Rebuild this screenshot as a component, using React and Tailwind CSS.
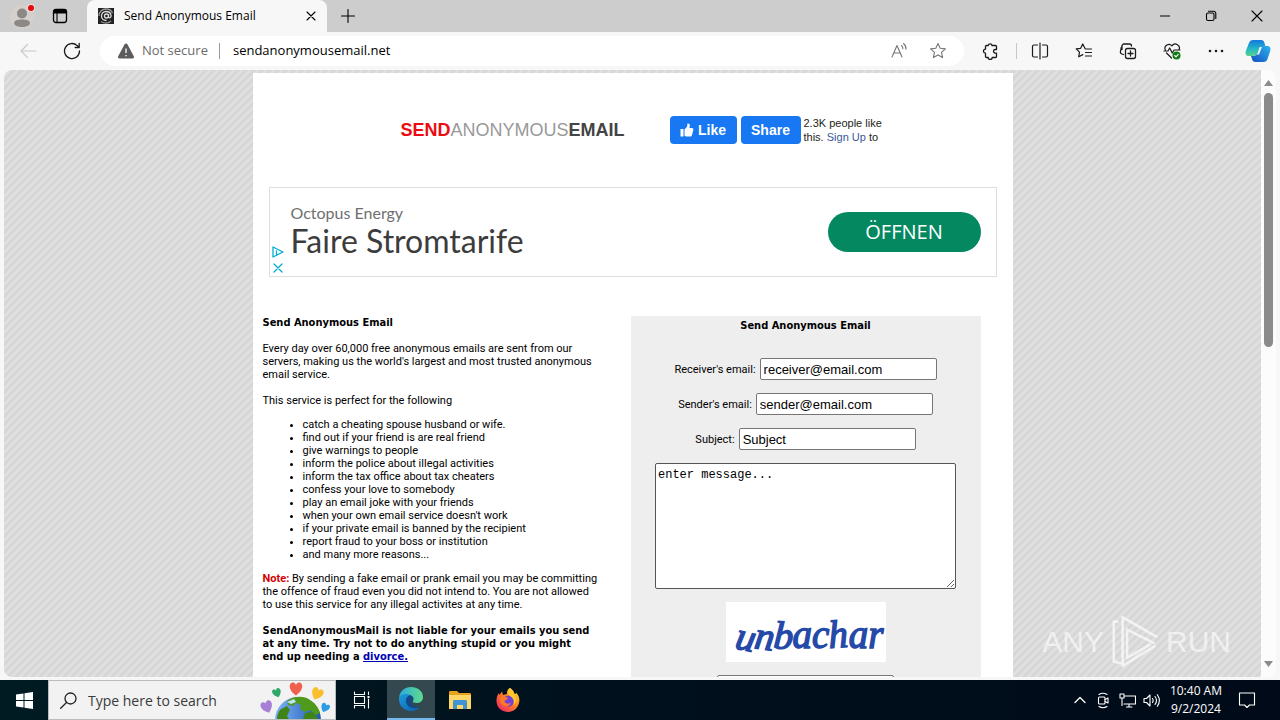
import React from 'react';

const reasons = [
  'catch a cheating spouse husband or wife.',
  'find out if your friend is are real friend',
  'give warnings to people',
  'inform the police about illegal activities',
  'inform the tax office about tax cheaters',
  'confess your love to somebody',
  'play an email joke with your friends',
  "when your own email service doesn't work",
  'if your private email is banned by the recipient',
  'report fraud to your boss or institution',
  'and many more reasons...',
];

const fields = [
  { id: 'receiver', label: "Receiver's email:", value: 'receiver@email.com' },
  { id: 'sender', label: "Sender's email:", value: 'sender@email.com' },
  { id: 'subject', label: 'Subject:', value: 'Subject' },
];

const Icon = ({ size = 18, box = 18, className = '', children }) => (
  <svg
    width={size}
    height={size}
    viewBox={`0 0 ${box} ${box}`}
    fill="none"
    stroke="currentColor"
    strokeWidth="1.1"
    strokeLinecap="round"
    strokeLinejoin="round"
    className={className}
    aria-hidden="true"
  >
    {children}
  </svg>
);

const TabStrip = () => (
  <div className="flex h-8 shrink-0 items-stretch bg-[#cdcdcd]">
    <button aria-label="Profile" className="flex w-11 items-center justify-center">
      <svg width="28" height="28" viewBox="0 0 28 28">
        <circle cx="14" cy="15" r="12" fill="#d3d0ce" />
        <circle cx="14" cy="11.500" r="5" fill="#8b8886" />
        <path d="M6 21c0-2.600 3.500-3.600 8-3.600s8 1 8 3.600c0 2.400-3.500 4-8 4s-8-1.600-8-4z" fill="#8b8886" />
        <circle cx="23" cy="6" r="4" fill="#f4d5d5" />
        <circle cx="23" cy="6" r="3" fill="#e00b0b" />
      </svg>
    </button>
    <button aria-label="Tab actions" className="flex w-8 items-center justify-center">
      <Icon size={16} box={16}>
        <rect x="1.500" y="1.500" width="13" height="13" rx="2.500" strokeWidth="1.300" />
        <path d="M1.500 3.500a2 2 0 0 1 2-2h9a2 2 0 0 1 2 2V5h-13z" fill="currentColor" />
        <path d="M5 5v9.500" />
      </Icon>
    </button>
    <div className="ml-[11px] flex w-60 items-center rounded-t-lg bg-[#f7f7f7] pl-[11px] pr-[6px]">
      <svg width="16" height="16" viewBox="0 0 16 16" className="shrink-0">
        <rect width="16" height="16" fill="#222" />
        <g fill="none" stroke="#ddd" strokeWidth="1.300">
          <circle cx="8.500" cy="8" r="2" />
          <path d="M10.500 6v3.500c1.500 1 3-.5 2.500-2.500-.5-2.500-2.500-3.500-5-3.500S3.500 5.500 3.500 8s2 4.500 5 4.500" />
          <path d="M1 8c0-4 3-7 7-7 3 0 5.500 1.500 6.500 4M3 13.500c3 2 7 2 10-.5" stroke="#999" />
        </g>
      </svg>
      <span className="ml-[10px] flex-1 whitespace-nowrap text-[12px] leading-4 text-black">Send Anonymous Email</span>
      <button aria-label="Close tab" className="flex size-5 items-center justify-center">
        <Icon size={10} box={10}><path d="M1 1l8 8M9 1l-8 8" /></Icon>
      </button>
    </div>
    <button aria-label="New tab" className="ml-3 flex w-[18px] items-center justify-center">
      <Icon size={14} box={14}><path d="M7 .5v13M.5 7h13" /></Icon>
    </button>
    <div className="flex-1" />
    <button aria-label="Minimize" className="flex w-[46px] items-center justify-center">
      <Icon size={10} box={10}><path d="M0 5h10" /></Icon>
    </button>
    <button aria-label="Restore" className="flex w-[46px] items-center justify-center">
      <Icon size={12} box={12}>
        <rect x="1.500" y="3" width="7.500" height="7.500" rx="1.500" />
        <path d="M3.500 1.200h5a2.300 2.300 0 0 1 2.300 2.300v5" />
      </Icon>
    </button>
    <button aria-label="Close" className="flex w-[46px] items-center justify-center">
      <Icon size={12} box={12}><path d="M1 1l10 10M11 1L1 11" /></Icon>
    </button>
  </div>
);

const star = 'M9 1.500l2.200 4.800 5.200.6-3.900 3.500 1.100 5.200L9 13l-4.600 2.600 1.100-5.200L1.600 6.900l5.200-.6z';

const Toolbar = () => (
  <div className="flex h-[38px] shrink-0 items-center bg-[#f7f7f7] pl-[18px] pr-2 text-[#1b1b1b]">
    <button aria-label="Back" className="flex w-5 justify-center text-[#c8c8c8]">
      <Icon><path d="M17 9H2M8.500 2.500L2 9l6.500 6.500" /></Icon>
    </button>
    <button aria-label="Refresh" className="ml-6 flex w-5 justify-center">
      <Icon><path d="M16.500 9a7.500 7.500 0 1 1-2.300-5.400L16 5.200M16.200 1.500v4h-4" strokeWidth="1.300" /></Icon>
    </button>
    <div className="ml-[18px] flex h-[30px] flex-1 items-center rounded-full bg-white pl-[17px] pr-[17px]">
      <svg width="18" height="16" viewBox="0 0 18 16" className="shrink-0" aria-hidden="true">
        <path d="M7.600 1.300a1.600 1.600 0 0 1 2.800 0l6.400 11.900a1.500 1.500 0 0 1-1.300 2.300h-13a1.500 1.500 0 0 1-1.300-2.300z" fill="#5c5c5c" />
        <path d="M9 5.500v4.500M9 12v1.300" stroke="#fff" strokeWidth="1.300" />
      </svg>
      <span className="ml-[7px] whitespace-nowrap text-[13px] text-[#6b6b6b]">Not secure</span>
      <span className="ml-[11px] h-4 w-px bg-[#9a9a9a]" />
      <input
        aria-label="Address"
        defaultValue="sendanonymousemail.net"
        className="ml-[13px] min-w-0 flex-1 bg-transparent text-[13px] text-black outline-none"
      />
      <button aria-label="Read aloud" className="text-[#767676]">
        <Icon>
          <path d="M2 15L7 3.500 12 15M3.800 11h6.400M11.500 3.500c1 .8 1.500 2 1.300 3.300M13.500 1.500c1.700 1.300 2.700 3.300 2.400 5.600" />
        </Icon>
      </button>
      <button aria-label="Favorite this page" className="ml-[21px] text-[#767676]">
        <Icon><path d={star} /></Icon>
      </button>
    </div>
    <button aria-label="Extensions" className="ml-[18px]">
      <Icon>
        <path d="M6.200 3.500a2 2 0 0 1 3.900 0h3.400a1 1 0 0 1 1 1v3h-1.200a1.800 1.800 0 0 0 0 3.600h1.200v3.400a1 1 0 0 1-1 1h-3.300a2 2 0 0 1-4 0H4.500a1 1 0 0 1-1-1v-3.300a2 2 0 0 1 0-4V4.500a1 1 0 0 1 1-1z" strokeWidth="1.300" />
      </Icon>
    </button>
    <span className="ml-4 h-4 w-px bg-[#c8c8c8]" />
    <button aria-label="Split screen" className="ml-[14px]">
      <Icon>
        <path d="M9 1v16M6.500 3H3a1.500 1.500 0 0 0-1.500 1.500v9A1.500 1.500 0 0 0 3 15h3.500M11.500 3H15a1.500 1.500 0 0 1 1.500 1.500v9A1.500 1.500 0 0 1 15 15h-3.500" strokeWidth="1.200" />
      </Icon>
    </button>
    <button aria-label="Favorites" className="ml-[26px]">
      <Icon>
        <path d="M10 6.500L7.800 2 5.600 6.300l-4.400.6 3.300 3.200-.8 4.700L7.800 12.600M10.500 7h6M10.500 10.500h6M10.500 14h6" strokeWidth="1.200" />
      </Icon>
    </button>
    <button aria-label="Collections" className="ml-[26px]">
      <Icon>
        <rect x="6.500" y="6.500" width="10" height="10" rx="2" strokeWidth="1.300" />
        <path d="M11.500 9v5M9 11.500h5M4.500 12.500L2.800 12a2 2 0 0 1-1.400-2.300l1-4.500M3 7.500V4a2 2 0 0 1 2-2h5.500a2 2 0 0 1 2 2" strokeWidth="1.300" />
      </Icon>
    </button>
    <button aria-label="Browser essentials" className="ml-[26px]">
      <Icon>
        <path d="M2.300 8A4 4 0 0 1 9 3.800 4 4 0 0 1 15.800 8M1 9h4l1.700-3 2.500 5 1.800-3h6M3.500 11L8.500 16" strokeWidth="1.200" />
        <circle cx="13.500" cy="13.500" r="4" fill="#107c10" stroke="none" />
        <path d="M11.700 13.500l1.300 1.300 2.200-2.400" stroke="#fff" />
      </Icon>
    </button>
    <button aria-label="Settings and more" className="ml-[26px]">
      <Icon>
        <g fill="currentColor" stroke="none">
          <circle cx="3" cy="9" r="1.300" /><circle cx="9" cy="9" r="1.300" /><circle cx="15" cy="9" r="1.300" />
        </g>
      </Icon>
    </button>
    <button aria-label="Copilot" className="ml-[19px]">
      <svg width="28" height="26" viewBox="0 0 28 26">
        <defs>
          <linearGradient id="cpA" x1="0" y1="0" x2="0" y2="1">
            <stop offset="0" stopColor="#1577dc" /><stop offset=".55" stopColor="#22b8c8" /><stop offset="1" stopColor="#5bd08a" />
          </linearGradient>
          <linearGradient id="cpB" x1="1" y1="0" x2="0" y2="1">
            <stop offset="0" stopColor="#2bb4ee" /><stop offset="1" stopColor="#154fc4" />
          </linearGradient>
        </defs>
        <path d="M19.500 24h-8c-2 0-3-1-3.500-3l-1-3h4l3.500-10H23c3 0 4 2 3.200 5l-2.700 8c-.6 2-2 3-4 3z" fill="url(#cpB)" />
        <path d="M9 2h8c2 0 3 1 3.500 3l.8 3h-3c-2 0-3 1-3.600 3l-1.700 4.500c-.6 1.700-2 2.500-4 2.500H5c-3 0-4-2-3.200-5L5 5c.6-2 2-3 4-3z" fill="url(#cpA)" />
        <path d="M15.700 9h2.300l-3 7.500h-3.200c1-.3 1.500-1 1.900-2l1.200-3.500c.2-.8.400-1.400.8-2z" fill="#e8f6fb" />
      </svg>
    </button>
  </div>
);

const Header = () => (
  <header className="flex items-center pl-[148px] pt-[43px]">
    <h1 className="flex w-[269px] whitespace-nowrap font-['Liberation_Sans',sans-serif] text-[18px] leading-7">
      <span className="font-bold text-[#ec0b12]">SEND</span>
      <span className="text-[#999]">ANONYMOUS</span>
      <span className="font-bold text-[#444]">EMAIL</span>
    </h1>
    <div className="flex items-center font-['Liberation_Sans',Arial,sans-serif]">
      <button className="flex h-7 w-[67px] items-center justify-center gap-1 rounded bg-[#1877f2] text-[14px] font-bold text-white">
        <svg width="14" height="14" viewBox="0 0 14 14" fill="#fff" aria-hidden="true">
          <path d="M.5 6h3v7.500h-3zM4.500 6.500L7 3.800 7.500.5c1.700-.3 2.600 1 2.300 2.600L9.400 5H12c1.200 0 1.600 1 1.300 2l-1.300 5c-.3 1-.8 1.500-1.800 1.500H7c-1.200 0-1.800-.4-2.500-1z" />
        </svg>
        Like
      </button>
      <button className="ml-1 h-7 w-[60px] rounded bg-[#1877f2] text-[14px] font-bold text-white">Share</button>
      <p className="ml-[3px] whitespace-nowrap text-[11px] leading-[14px] text-[#1c1e21]">
        2.3K people like
        <br />
        this. <a href="#signup" className="text-[#385898]">Sign Up</a> to
      </p>
    </div>
  </header>
);

const Advert = () => (
  <section className="mx-4 mt-[43px] flex h-[90px] items-center justify-between border border-[#dedede] pr-[15px]">
    <div className="flex h-full items-end">
      <div className="flex w-[21px] flex-col gap-1 pb-[2px] pl-[2px] text-[#00aecd]">
        <Icon size={12} box={12}><path d="M1 1l10 5-10 5zM4.500 5v3" strokeWidth="1.300" /></Icon>
        <Icon size={12} box={12}><path d="M2 2l8 8M10 2l-8 8" strokeWidth="1.300" /></Icon>
      </div>
      <div className="self-center whitespace-nowrap pb-[2px] font-[Lato,sans-serif]">
        <p className="text-[16px] leading-5 text-[#6f6f6f]">Octopus Energy</p>
        <p className="text-[32px] leading-9 text-[#3c3c3c]">Faire Stromtarife</p>
      </div>
    </div>
    <button className="h-10 w-[153px] rounded-full bg-[#048860] text-[20px] text-white">ÖFFNEN</button>
  </section>
);

const About = () => (
  <section className="w-[368px] whitespace-nowrap">
    <h2 className="font-['DejaVu_Sans_Condensed','DejaVu_Sans',sans-serif] font-bold">Send Anonymous Email</h2>
    <p className="mt-[13px]">
      Every day over 60,000 free anonymous emails are sent from our
      <br />
      servers, making us the world's largest and most trusted anonymous
      <br />
      email service.
    </p>
    <p className="mt-[13px]">This service is perfect for the following</p>
    <ul className="my-[11px] list-disc pl-10">
      {reasons.map((reason) => (
        <li key={reason}>{reason}</li>
      ))}
    </ul>
    <p>
      <b className="text-[#d40000]">Note:</b> By sending a fake email or prank email you may be committing
      <br />
      the offence of fraud even you did not intend to. You are not allowed
      <br />
      to use this service for any illegal activites at any time.
    </p>
    <p className="mt-[13px] font-['DejaVu_Sans_Condensed','DejaVu_Sans',sans-serif] font-bold">
      SendAnonymousMail is not liable for your emails you send
      <br />
      at any time. Try not to do anything stupid or you might
      <br />
      end up needing a <a href="#divorce" className="text-[#0000b4] underline">divorce.</a>
    </p>
  </section>
);

const Captcha = () => (
  <svg width="160" height="60" viewBox="0 0 160 60" role="img" aria-label="Captcha" className="bg-white">
    <text x="8" y="46" fontFamily="Liberation Serif, serif" fontSize="39" fontStyle="italic" fill="#2549a8" stroke="#2549a8" strokeWidth="1.400" rotate="12 8 4 0 0 -4 0 0">
      unbachar
    </text>
  </svg>
);

const EmailForm = () => (
  <form className="flex w-[350px] flex-col items-center gap-[13px] bg-[#eee] pt-[3px]">
    <h2 className="mb-[13px] font-['DejaVu_Sans_Condensed','DejaVu_Sans',sans-serif] font-bold">Send Anonymous Email</h2>
    {fields.map((field) => (
      <div key={field.id} className="flex items-center gap-1">
        <label htmlFor={field.id}>{field.label}</label>
        <input
          id={field.id}
          defaultValue={field.value}
          className="h-[22px] w-[177px] rounded-[2px] border border-[#767676] bg-white px-[3px] font-['Liberation_Sans',Arial,sans-serif] text-[13px]"
        />
      </div>
    ))}
    <textarea
      aria-label="Message"
      defaultValue="enter message..."
      className="h-[126px] w-[301px] rounded-[2px] border border-[#555] bg-white px-[2px] py-[3px] font-['Liberation_Mono',monospace] text-[12px] leading-4"
    />
    <Captcha />
    <input aria-label="Captcha text" className="h-[22px] w-[177px] rounded-[2px] border border-[#767676] bg-white" />
  </form>
);

const Watermark = () => (
  <div className="absolute bottom-1 right-[45px] flex items-center gap-2 font-['Liberation_Sans',sans-serif] text-[30px] leading-[60px] text-white/60">
    <span>ANY</span>
    <svg width="46" height="62" viewBox="0 0 52 62" fill="none" stroke="#fff" strokeOpacity=".65" strokeWidth="3" strokeLinejoin="round" strokeLinecap="round" aria-hidden="true">
      <path d="M12 3v55M12 3l38 22M17 17l30 15M12 58l36-22M17 17v32l26-15M6 8H2v45l8 2" />
    </svg>
    <span>RUN</span>
  </div>
);

const Viewport = () => (
  <main className="flex min-h-0 flex-1 bg-[#f7f7f7] pb-[3px] pl-1 pr-1">
    <div className="relative flex min-h-0 flex-1 overflow-hidden rounded-lg">
      <div className="min-h-0 flex-1 overflow-hidden bg-[linear-gradient(135deg,#d6d6d6_25%,#dfdfdf_25%,#dfdfdf_50%,#d6d6d6_50%,#d6d6d6_75%,#dfdfdf_75%)] bg-[length:8px_8px] pt-[3px]">
        <div className="mx-auto h-full w-[760px] bg-white">
          <Header />
          <Advert />
          <div className="mt-[39px] flex pl-[10px] font-[Roboto,'DejaVu_Sans',sans-serif] text-[11px] leading-[13px] text-black">
            <About />
            <EmailForm />
          </div>
        </div>
      </div>
      <Watermark />
      <div className="flex w-[15px] flex-col items-center justify-between bg-[#fcfcfc] py-[10px]">
        <div className="flex flex-col items-center gap-[7px]">
          <svg width="9" height="6" viewBox="0 0 9 6" aria-hidden="true"><path d="M4.500 0L9 6H0z" fill="#8b8b8b" /></svg>
          <div className="h-[254px] w-[9px] rounded-full bg-[#8b8b8b]" />
        </div>
        <svg width="9" height="6" viewBox="0 0 9 6" aria-hidden="true"><path d="M4.500 6L9 0H0z" fill="#8b8b8b" /></svg>
      </div>
    </div>
  </main>
);

const heart = 'M0 5C-7 0-5-5-2.500-5-1-5 0-3.500 0-3 0-3.500 1-5 2.500-5 5-5 7 0 0 5z';

const SearchArt = () => (
  <svg width="78" height="38" viewBox="0 0 78 38" className="shrink-0" aria-hidden="true">
    <defs>
      <linearGradient id="sea" x1="0" y1="0" x2="1" y2="0">
        <stop offset="0" stopColor="#7fb2ff" /><stop offset="1" stopColor="#1f5ba8" />
      </linearGradient>
    </defs>
    <circle cx="41" cy="39" r="23" fill="url(#sea)" />
    <path d="M30 20c6-5 17-6 23-1 5 3 8 7 10 13l-4 2-6-5-5 2-5-3 1-4-5-2-3 3-5-1z" fill="#4f9a1c" />
    <path d="M24 28l6-3 3 4-3 6 2 3H20c0-4 1-7 4-10zM48 32l8-1 5 7H46z" fill="#3f8416" />
    <path d="M30 21l7-3 2 3-5 2z" fill="#bfe3f5" />
    <path d={heart} transform="translate(39 8) scale(1.300)" fill="#f0604f" />
    <path d={heart} transform="translate(20 12) rotate(-20) scale(.9)" fill="#2ea868" />
    <path d={heart} transform="translate(60 13) rotate(25) scale(1.200)" fill="#fbbe2e" />
    <path d={heart} transform="translate(10 26) rotate(-20) scale(1.200)" fill="#a77fd6" />
    <path d={heart} transform="translate(68 27) rotate(25) scale(.9)" fill="#2f9be4" />
  </svg>
);

const EdgeLogo = () => (
  <svg width="26" height="26" viewBox="0 0 26 26">
    <defs>
      <linearGradient id="edgeTop" x1="0" y1="0" x2="1" y2="0">
        <stop offset="0" stopColor="#2aa9e0" /><stop offset="1" stopColor="#5fdc8a" />
      </linearGradient>
      <linearGradient id="edgeLow" x1="0" y1="0" x2="1" y2="1">
        <stop offset="0" stopColor="#1a9be0" /><stop offset="1" stopColor="#0c5fac" />
      </linearGradient>
    </defs>
    <path d="M1 12C1.500 5.500 6.500 1 13 1c7 0 12 4.500 12 10 0 4-3 6-6.500 6-3 0-4-1-3.500-2 1.500-2.500 0-5-2.500-5.500C8 8.500 2.500 9 1 12z" fill="url(#edgeTop)" />
    <path d="M1 12c2-4 7.500-5 11-3-3 1.500-4.500 4.500-3.500 8 1.500 4.500 7.500 6.500 13.500 4.500C19.500 24 16.500 25 13 25 6 25 .5 19.500 1 12z" fill="url(#edgeLow)" />
    <path d="M12 9c-3 1.500-4.500 4.500-3.500 8 1.500 4.500 7.500 6.500 14 3.500-7 2-12.500-3.500-8-7 .5-2-.5-4-2.500-4.500z" fill="#114a8b" />
  </svg>
);

const FolderLogo = () => (
  <svg width="22" height="20" viewBox="0 0 22 20">
    <path d="M0 2.500C0 1.500.5 1 1.500 1H8l2 2h10.500c1 0 1.500.5 1.500 1.500V8H0z" fill="#e8a21c" />
    <path d="M0 5h22v14H0z" fill="#ffd766" />
    <path d="M4 11.500c0-1 .5-1.500 1.500-1.500h11c1 0 1.500.5 1.500 1.500V19h-4v-4H8v4H4z" fill="#3f93d2" />
  </svg>
);

const FirefoxLogo = () => (
  <svg width="24" height="24" viewBox="0 0 24 24">
    <defs>
      <linearGradient id="fox" x1="1" y1="0" x2=".1" y2="1">
        <stop offset="0" stopColor="#ffe53b" /><stop offset=".45" stopColor="#ff8a1f" /><stop offset="1" stopColor="#ee1d6b" />
      </linearGradient>
    </defs>
    <path d="M14 0c3 2 4 4 4.500 6 1 .2 1.500-.5 1.500-1.500 3 3 4 6.500 3 10.500-1.200 5-5.500 9-11 9S1.500 20.500.7 15C0 11 1 7.500 3 5l.5 2L6 3.500 7 7l4-1c-.5-2.500.8-5 3-6z" fill="url(#fox)" />
    <circle cx="12.500" cy="13" r="5.500" fill="#7540d8" />
    <path d="M5 9c2-1 4 0 6 .5 1.500.5.5 2-1 2.500s-2 1.500-1 2.500c2 2 5 1 6 0-1 4-7 5-10 1-1.300-2-1-5 0-6.500z" fill="#ff7a26" />
    <path d="M14 0c3 2 4 4 4.500 6 3 4 2 9-1 11 1-4 0-7-3.500-9-3-2-2.500-5.500 0-8z" fill="#ffc62e" />
  </svg>
);

const Taskbar = () => (
  <footer className="flex h-10 shrink-0 items-stretch bg-gradient-to-r from-[#001b22] via-[#00101c] to-[#000a18] text-white">
    <button aria-label="Start" className="flex w-12 items-center justify-center">
      <svg width="17" height="17" viewBox="0 0 17 17" fill="#fff">
        <path d="M0 2.500l7.500-1V8H0zM8.500 1.300L17 0v8H8.500zM0 9h7.500v6.500l-7.500-1zM8.500 9H17v8l-8.500-1.300z" />
      </svg>
    </button>
    <label className="flex w-72 items-center border border-[#b8bcbe] bg-[#f2f2f2] pl-[11px] text-[#222]">
      <Icon size={17} box={17} className="shrink-0">
        <circle cx="10.500" cy="6.500" r="5.500" strokeWidth="1.300" />
        <path d="M6.500 10.500L.7 16.300" strokeWidth="1.300" />
      </Icon>
      <input
        aria-label="Search"
        placeholder="Type here to search"
        className="ml-[11px] min-w-0 flex-1 bg-transparent text-[14px] text-black outline-none placeholder:text-[#3a3a3a]"
      />
      <SearchArt />
    </label>
    <button aria-label="Task view" className="flex w-[51px] items-center justify-center">
      <Icon size={18}>
        <path d="M1.500 1v2.500h10V1M1.500 17v-2.500h10V17M1.500 5.500h10v7h-10zM15.500 1v2.500M15.500 8v9" />
        <path d="M14.500 5h2v2h-2z" fill="currentColor" stroke="none" />
      </Icon>
    </button>
    <button aria-label="Microsoft Edge" className="flex w-12 items-center justify-center border-b-2 border-[#76b9ed] bg-[#33484f]"><EdgeLogo /></button>
    <button aria-label="File Explorer" className="flex w-[49px] items-center justify-center"><FolderLogo /></button>
    <button aria-label="Firefox" className="flex w-12 items-center justify-center"><FirefoxLogo /></button>
    <div className="flex-1" />
    <div className="flex items-center gap-[7px]">
      <Icon size={16} box={16}><path d="M3 10.500l5-5 5 5" strokeWidth="1.300" /></Icon>
      <Icon size={17} box={17}>
        <rect x="3.500" y="5" width="6.500" height="7" rx="1" />
        <path d="M10 7.500l3-1.500v5l-3-1.500M4 2.500c2.500-1.500 5.500-1.500 8 0M4 14.500c2.500 1.500 5.500 1.500 8 0" />
      </Icon>
      <Icon size={17} box={17}>
        <path d="M6 4h10.500v8H5M10 12v3M7.500 15h5.500M1 2h4v4H1zM3 6v7.500" />
      </Icon>
      <Icon size={17} box={17}>
        <path d="M1 6.500h2.500L7 3v11l-3.500-3.500H1zM9.500 6.500c.8 1.200.8 2.800 0 4M12 4.500c1.800 2.400 1.800 5.600 0 8M14.300 2.700c2.500 3.500 2.500 8.100 0 11.600" />
      </Icon>
    </div>
    <div className="ml-[10px] flex flex-col items-center justify-center text-[12px] leading-[18px]">
      <span>10:40 AM</span>
      <span>9/2/2024</span>
    </div>
    <button aria-label="Notifications" className="mr-2 flex w-[50px] items-center justify-center">
      <Icon><path d="M1.500 2h15v12h-5L9 16.500 6.500 14h-5z" /></Icon>
    </button>
  </footer>
);

export default function App() {
  return (
    <div className="flex h-screen flex-col overflow-hidden bg-[#f7f7f7] font-['Open_Sans','Noto_Sans',sans-serif]">
      <TabStrip />
      <Toolbar />
      <Viewport />
      <Taskbar />
    </div>
  );
}
